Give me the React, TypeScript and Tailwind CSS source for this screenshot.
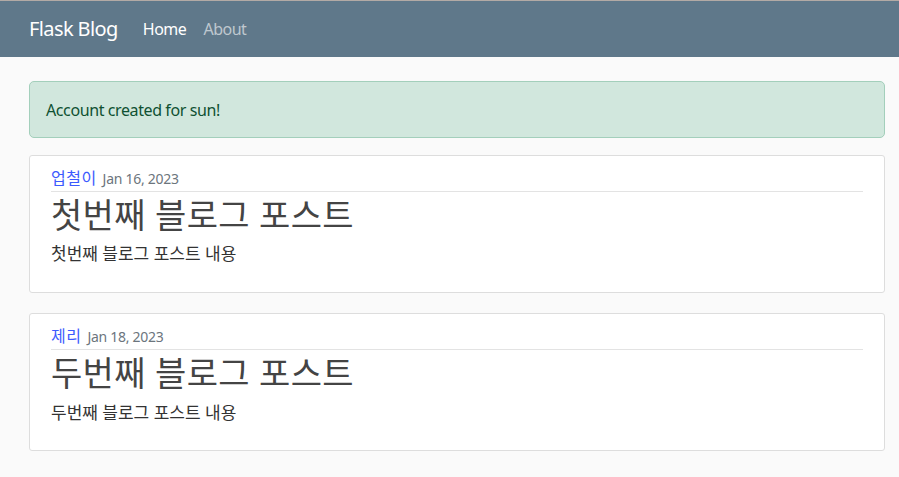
import React from "react";

const posts = [
  { author: "업철이", date: "Jan 16, 2023", title: "첫번째 블로그 포스트", content: "첫번째 블로그 포스트 내용" },
  { author: "제리", date: "Jan 18, 2023", title: "두번째 블로그 포스트", content: "두번째 블로그 포스트 내용" },
];

const font = { fontFamily: '"Noto Sans", "Noto Sans CJK KR", sans-serif' };

export default function App() {
  return (
    <div className="min-h-[477px] bg-[#fafafa] text-[#212529]" style={font}>
      <header className="h-[57px] bg-[#5f788a] border-t border-[#b3aaa5] flex items-center px-[29px]">
        <a className="text-white text-[20px] tracking-[-0.03em] mr-[25px]">Flask Blog</a>
        <nav className="flex gap-[17px] text-[16px] tracking-[-0.03em]">
          <a className="text-white">Home</a>
          <a className="text-white/60">About</a>
        </nav>
      </header>
      <main className="ml-[29px] mr-[14px] pt-6">
        <div className="h-[57px] mb-[17px] rounded-[5px] border border-[#a3cfbb] bg-[#d1e7dd] text-[#0f5132] px-4 flex items-center text-[16px] tracking-[-0.025em]">
          Account created for sun!
        </div>
        {posts.map((p) => (
          <article key={p.title} className="mb-5 bg-white border border-[#dddddd] rounded-[3px] pt-[10px] pb-[26px] px-[21px]">
            <div className="border-b border-[#e3e3e3] pb-px mb-1 flex items-baseline">
              <a className="text-[#3d5afe] text-[16px] tracking-[0.03em] mr-[6px]">{p.author}</a>
              <small className="text-[#6c757d] text-[14px] tracking-[-0.02em]">{p.date}</small>
            </div>
            <h2 className="text-[#444444] text-[34px] leading-[1.13] mb-[8px] tracking-[0.01em]">{p.title}</h2>
            <p className="text-[17px] leading-[1.4] text-[#333]">{p.content}</p>
          </article>
        ))}
      </main>
    </div>
  );
}
